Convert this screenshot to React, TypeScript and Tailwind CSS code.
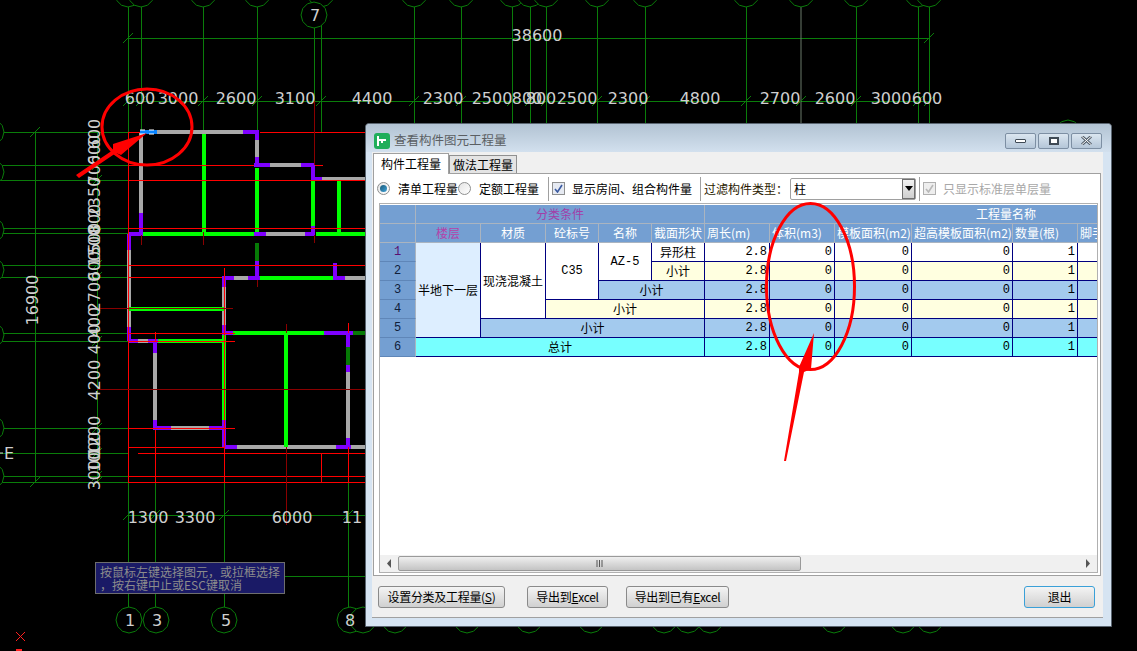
import type { ReactNode } from "react";

type Seg = [number, number, number, number];

const FONT = "font-['Noto_Sans_CJK_SC','Liberation_Sans',sans-serif]";

const gridH: Seg[] = [
  [128, 38, 929, 38],
  [128, 101, 929, 101],
  [0, 132, 128, 132], [0, 165, 128, 165], [0, 180, 128, 180], [0, 228, 128, 228], [0, 233, 128, 233],
  [0, 265, 128, 265], [0, 277, 128, 277], [0, 333, 128, 333], [0, 341, 128, 341], [0, 428, 128, 428],
  [0, 453, 128, 453], [0, 476, 128, 476], [0, 482, 128, 482],
  [128, 515, 365, 515],
  [285, 576, 365, 576],
];

const gridV: Seg[] = [
  [128, 7, 128, 132], [141, 7, 141, 132], [203, 7, 203, 132], [257, 7, 257, 132], [314, 28, 314, 101], [321, 7, 321, 132],
  [414, 7, 414, 123], [461, 7, 461, 123], [512, 7, 512, 123], [530, 7, 530, 123], [546, 7, 546, 123], [597, 7, 597, 123],
  [645, 7, 645, 123], [746, 7, 746, 123], [856, 7, 856, 123], [918, 7, 918, 123], [929, 7, 929, 123],
  [35, 132, 35, 483], [97, 132, 97, 483],
  [128, 482, 128, 607], [155, 482, 155, 607], [224, 482, 224, 607], [348, 482, 348, 607],
];

// tick marks on the dimension lines
const ticks: [number, number][] = [
  [128, 38], [929, 38], [128, 101], [141, 101], [203, 101], [257, 101], [321, 101], [414, 101], [461, 101], [512, 101],
  [530, 101], [546, 101], [597, 101], [645, 101], [746, 101], [801, 101], [856, 101], [918, 101], [929, 101],
  [128, 515], [155, 515], [224, 515], [348, 515],
  [97, 165], [97, 180], [97, 233], [97, 265], [97, 277], [97, 341], [97, 428], [97, 453], [97, 476], [97, 482],
  [35, 132], [35, 482],
];

const circles: [number, number][] = [
  [128, -6], [141, -6], [203, -6], [257, -6], [321, -6], [414, -6], [461, -6], [512, -6], [530, -6], [546, -6],
  [597, -6], [645, -6], [746, -6], [801, -6], [856, -6], [918, -6], [929, -6], [314, 15],
  [-9, 132], [-9, 172], [-9, 230], [-9, 270], [-9, 335], [-9, 428], [-9, 476],
  [129, 620], [156, 620], [224, 620], [350, 620], [363, 620],
  [395, 620], [467, 620], [529, 620], [591, 620], [664, 620], [688, 620], [710, 620], [834, 620], [903, 620], [930, 620],
  [1068, 133],
];

const gray: Seg[] = [
  [141, 132, 243, 132], [141, 132, 141, 213], [257, 132, 257, 157], [270, 165, 301, 165], [322, 179, 365, 179],
  [266, 234, 305, 234], [129, 250, 129, 328], [234, 278, 248, 278], [224, 287, 224, 325], [138, 341, 148, 341],
  [155, 353, 155, 420], [171, 428, 209, 428], [348, 372, 348, 438], [237, 447, 336, 447], [351, 447, 365, 447],
  [345, 278, 365, 278],
];

const green: Seg[] = [
  [203.5, 134, 203.5, 232], [257, 168, 257, 232], [313, 181, 313, 226], [339, 181, 339, 232],
  [143, 234, 254, 234], [316, 234, 365, 234], [260, 278, 333, 278], [129, 309, 224, 309], [158, 341, 224, 341],
  [224, 335, 224, 420], [233, 333, 324, 333], [286, 333, 286, 447],
];

const darkGreen: Seg[] = [[257, 243, 257, 261], [353, 333, 365, 333], [348, 347, 348, 365]];

const purple: Seg[] = [
  [243, 132, 259, 132], [257, 132, 257, 140], [257, 157, 257, 167], [254, 165, 270, 165], [301, 165, 315, 165],
  [313, 165, 313, 180], [313, 179, 322, 179], [313, 226, 313, 235], [141, 213, 141, 235], [128, 234, 143, 234],
  [254, 234, 266, 234], [305, 234, 315, 234], [129, 234, 129, 250], [257, 261, 257, 280], [248, 278, 260, 278],
  [333, 278, 345, 278], [335, 263, 335, 278], [222, 278, 234, 278], [224, 278, 224, 287], [224, 325, 224, 335],
  [129, 327, 129, 341], [128, 341, 138, 341], [148, 341, 158, 341], [155, 341, 155, 353], [155, 420, 155, 430],
  [155, 428, 171, 428], [209, 428, 224, 428], [224, 420, 224, 447], [224, 447, 237, 447], [224, 333, 233, 333],
  [324, 333, 353, 333], [348, 333, 348, 347], [348, 365, 348, 372], [348, 438, 348, 447], [336, 447, 351, 447],
];

const red: Seg[] = [
  [128, 132, 140, 132], [260, 132, 365, 132], [128, 165, 254, 165], [315, 165, 323, 165], [128, 180, 365, 180],
  [128, 228, 365, 228], [128, 265, 365, 265],
  [128, 277, 222, 277], [128, 333, 235, 333], [128, 341, 235, 341], [128, 428, 235, 428], [128, 447, 224, 447],
  [138, 453, 365, 453], [128, 476, 365, 476], [128, 482, 365, 482],
  [128, 132, 128, 482], [155, 332, 155, 341], [155, 430, 155, 482], [224, 268, 224, 482], [348, 323, 348, 333], [348, 447, 348, 482],
  [321, 454, 321, 482],
];

const darkRed: Seg[] = [
  [90, 308, 233, 308], [97, 389, 365, 389], [314, 101, 314, 165], [314, 235, 314, 243], [203, 232, 203, 245], [286, 324, 286, 333], [286, 447, 286, 525], [257, 280, 257, 287], [141, 235, 141, 245],
];

const hDims: [string, number, number][] = [
  ["38600", 537, 41], ["600", 140, 104], ["3000", 178, 104], ["2600", 236, 104], ["3100", 295, 104], ["4400", 372, 104],
  ["2300", 443, 104], ["2500", 492, 104], ["800", 527, 104], ["800", 541, 104], ["2500", 577, 104], ["2300", 628, 104],
  ["4800", 700, 104], ["2700", 780, 104], ["2600", 835, 104], ["3000", 891, 104], ["600", 927, 104],
  ["1300", 148, 523], ["3300", 195, 523], ["6000", 292, 523], ["11", 352, 523],
];

const vDims: [string, number, number][] = [
  ["600", 94, 134], ["600", 94, 150], ["700", 94, 170], ["2350", 94, 197], ["800", 94, 219], ["500", 94, 238], ["1500", 94, 246],
  ["600", 94, 266], ["2700", 94, 292], ["400", 94, 322], ["400", 94, 339], ["4200", 94, 380], ["1200", 94, 436], ["1000", 94, 452],
  ["3000", 94, 470], ["16900", 32, 300],
];

function Lines({ segs, color, width }: { segs: Seg[]; color: string; width: number }) {
  return (
    <g stroke={color} strokeWidth={width} shapeRendering="crispEdges">
      {segs.map((s, i) => (
        <line key={i} x1={s[0]} y1={s[1]} x2={s[2]} y2={s[3]} />
      ))}
    </g>
  );
}

function CadDrawing() {
  return (
    <svg className="absolute left-0 top-0" width={1137} height={651}>
      <Lines segs={gridH} color="#0a7d0a" width={1} />
      <Lines segs={gridV} color="#0a7d0a" width={1} />
      <line x1={801} y1={7} x2={801} y2={123} stroke="#6a7a6a" />
      {ticks.map(([x, y], i) => (
        <line key={i} x1={x - 5} y1={y + 5} x2={x + 5} y2={y - 5} stroke="#0a7d0a" />
      ))}
      {circles.map(([x, y], i) => (
        <polygon
          key={i}
          fill="#000"
          stroke="#0a7d0a"
          points={[0, 1, 2, 3, 4, 5, 6, 7, 8, 9, 10, 11]
            .map((k) => `${x + 13 * Math.cos((k * Math.PI) / 6)},${y + 13 * Math.sin((k * Math.PI) / 6)}`)
            .join(" ")}
        />
      ))}
      <Lines segs={gray} color="#a8a8a8" width={4} />
      <Lines segs={green} color="#00ff00" width={4} />
      <Lines segs={darkGreen} color="#067a06" width={4} />
      <Lines segs={purple} color="#7f00ff" width={4} />
      <Lines segs={red} color="#ff0000" width={1} />
      <Lines segs={darkRed} color="#8a0000" width={1} />
      <rect x={140} y={130} width={17} height={4} fill="#0a84ff" />
      <line x1={140} y1={130} x2={157} y2={130} stroke="#fff" strokeDasharray="5 4" />
      <line x1={140} y1={134} x2={157} y2={134} stroke="#fff" strokeDasharray="5 4" />
      <g fill="#cfcfcf" fontFamily="'DejaVu Sans', sans-serif" fontSize="16" textAnchor="middle">
        {hDims.map(([t, x, y], i) => (
          <text key={i} x={x} y={y}>
            {t}
          </text>
        ))}
        {vDims.map(([t, x, y], i) => (
          <text key={i} x={x} y={y + 6} transform={`rotate(-90 ${x} ${y})`}>
            {t}
          </text>
        ))}
        <text x={315} y={21}>7</text>
        <text x={130} y={626}>1</text>
        <text x={157} y={626}>3</text>
        <text x={226} y={626}>5</text>
        <text x={350} y={626}>8</text>
        <text x={9} y={459}>E</text>
      </g>
      <line x1={0} y1={453} x2={3} y2={453} stroke="#cfcfcf" />
      <path d="M16 632 L25 641 M25 632 L16 641" stroke="#ff2020" />
      <rect x={16} y={649} width={6} height={2} fill="#ff2020" />
    </svg>
  );
}

function Annotations() {
  return (
    <svg className="pointer-events-none absolute left-0 top-0" width={1137} height={651}>
      <g fill="none" stroke="#ff0000" strokeWidth={3}>
        <ellipse cx={147} cy={127} rx={45} ry={38} />
        <ellipse cx={810.5} cy={286.5} rx={44} ry={83} />
      </g>
      <path d="M76 175 L113 150 L113 144 L147 133 L121 155 L116 153 L79 178 Z" fill="#ff0000" />
      <path d="M784 461 L799 372 L799 367 L814 333 L811 369 L804 372 L786 461 Z" fill="#ff0000" />
    </svg>
  );
}

function Tooltip() {
  return (
    <div className={`absolute left-[95px] top-[562px] h-[32px] w-[190px] border border-[#6e6e6e] bg-[#1a1a66] px-[4px] text-[12px] leading-[13px] text-[#8c8c8c] ${FONT}`}>
      <div className="pt-[2px]">按鼠标左键选择图元，或拉框选择</div>
      <div>，按右键中止或ESC键取消</div>
    </div>
  );
}

function Cell({ className = "", children }: { className?: string; children?: ReactNode }) {
  return (
    <div className={`flex items-center justify-center overflow-hidden whitespace-nowrap border-b border-r border-[#000080] text-[12px] text-black ${className}`}>
      {children}
    </div>
  );
}

function HeaderCell({ className = "", color = "text-white", children }: { className?: string; color?: string; children?: ReactNode }) {
  return (
    <div className={`flex items-center overflow-hidden whitespace-nowrap border-b border-r border-[#aab4c0] bg-[#749fd2] text-[12px] ${color} ${className}`}>
      {children}
    </div>
  );
}

function RowHead({ n }: { n: number }) {
  return (
    <div className={`flex items-center justify-center border-b border-r border-b-[#5f86b8] border-r-[#aab4c0] bg-[#749fd2] font-['Liberation_Mono',monospace] text-[12px] ${n === 1 ? "text-[#5a1070]" : "text-[#10203a]"}`}>
      {n}
    </div>
  );
}

function Values({ bg }: { bg: string }) {
  const vals = ["2.8", "0", "0", "0", "1", ""];
  return (
    <>
      {vals.map((v, i) => (
        <Cell key={i} className={`justify-end pr-[2px] font-['Liberation_Mono',monospace] ${bg}`}>
          {v}
        </Cell>
      ))}
    </>
  );
}

function QuantityGrid() {
  return (
    <div className="w-[717px] flex-1 overflow-hidden">
      <div className="grid w-[763px] grid-cols-[36px_65px_65px_53px_53px_53px_65px_65px_77px_101px_65px_65px] auto-rows-[19px]">
        <HeaderCell />
        <HeaderCell className="col-span-5 justify-center" color="text-[#a23ea8]">分类条件</HeaderCell>
        <HeaderCell className="col-span-6 pl-[271px]">工程量名称</HeaderCell>

        <HeaderCell />
        <HeaderCell className="justify-center" color="text-[#b542a8]">楼层</HeaderCell>
        <HeaderCell className="justify-center">材质</HeaderCell>
        <HeaderCell className="justify-center">砼标号</HeaderCell>
        <HeaderCell className="justify-center">名称</HeaderCell>
        <HeaderCell className="justify-center">截面形状</HeaderCell>
        <HeaderCell className="pl-[2px]">周长(m)</HeaderCell>
        <HeaderCell className="pl-[2px]">体积(m3)</HeaderCell>
        <HeaderCell className="pl-[2px]">模板面积(m2)</HeaderCell>
        <HeaderCell className="pl-[2px]">超高模板面积(m2)</HeaderCell>
        <HeaderCell className="pl-[2px]">数量(根)</HeaderCell>
        <HeaderCell className="pl-[2px]">脚手架</HeaderCell>

        <RowHead n={1} />
        <Cell className="row-span-5 bg-[#ddeeff]">半地下一层</Cell>
        <Cell className="row-span-4 bg-white">现浇混凝土</Cell>
        <Cell className="row-span-3 bg-white font-['Liberation_Mono',monospace]">C35</Cell>
        <Cell className="row-span-2 bg-white font-['Liberation_Mono',monospace]">AZ-5</Cell>
        <Cell className="bg-white">异形柱</Cell>
        <Values bg="bg-white" />

        <RowHead n={2} />
        <Cell className="bg-[#ffffe0]">小计</Cell>
        <Values bg="bg-[#ffffe0]" />

        <RowHead n={3} />
        <Cell className="col-span-2 bg-[#a3caee]">小计</Cell>
        <Values bg="bg-[#a3caee]" />

        <RowHead n={4} />
        <Cell className="col-span-3 bg-[#ffffe0]">小计</Cell>
        <Values bg="bg-[#ffffe0]" />

        <RowHead n={5} />
        <Cell className="col-span-4 bg-[#a3caee]">小计</Cell>
        <Values bg="bg-[#a3caee]" />

        <RowHead n={6} />
        <Cell className="col-span-5 bg-[#77ffff]">总计</Cell>
        <Values bg="bg-[#77ffff]" />
      </div>
    </div>
  );
}

function Scrollbar() {
  return (
    <div className="flex h-[17px] shrink-0 items-center bg-[#f0f0f0]">
      <div className="flex w-[18px] justify-center">
        <svg width={5} height={9}><path d="M4 0 L0 4.5 L4 9 Z" fill="#555" /></svg>
      </div>
      <div className="flex h-[15px] w-[403px] items-center justify-center rounded-[2px] border border-[#9a9a9a] bg-gradient-to-b from-[#efefef] to-[#c4c4c4]">
        <svg width={8} height={7}><path d="M1 0 V7 M3.500 0 V7 M6 0 V7" stroke="#555" /></svg>
      </div>
      <div className="flex flex-1 justify-end pr-[7px]">
        <svg width={5} height={9}><path d="M1 0 L5 4.5 L1 9 Z" fill="#555" /></svg>
      </div>
    </div>
  );
}

function Radio({ checked }: { checked?: boolean }) {
  return (
    <span className="flex h-[13px] w-[13px] items-center justify-center rounded-full border border-[#8e8f8f] bg-gradient-to-br from-[#e4e4e4] to-white">
      {checked && <span className="h-[7px] w-[7px] rounded-full bg-gradient-to-br from-[#1c5a7a] to-[#3fa2d8]" />}
    </span>
  );
}

function Check({ disabled }: { disabled?: boolean }) {
  return (
    <span className={`flex h-[13px] w-[13px] items-center justify-center border ${disabled ? "border-[#b0b0b0] bg-[#eeeeee]" : "border-[#8e8f8f] bg-[#e6eaf2]"}`}>
      <svg width={9} height={9}>
        <path d="M1 5 L3.500 8 L8 1" fill="none" stroke={disabled ? "#b8b8b8" : "#3a5aa0"} strokeWidth={1.6} />
      </svg>
    </span>
  );
}

function Toolbar() {
  return (
    <div className="flex h-[29px] shrink-0 items-center text-[12px] text-black">
      <div className="ml-[3px] flex w-[81px] items-center gap-[8px]"><Radio checked /><span>清单工程量</span></div>
      <div className="flex w-[90px] items-center gap-[8px]"><Radio /><span>定额工程量</span></div>
      <div className="h-[24px] w-px bg-[#a0a0a0]" />
      <div className="ml-[3px] flex w-[148px] items-center gap-[7px]"><Check /><span>显示房间、组合构件量</span></div>
      <div className="h-[24px] w-px bg-[#a0a0a0]" />
      <span className="ml-[3px] w-[86px] text-[#2a1a00]">过滤构件类型：</span>
      <div className="flex h-[22px] w-[126px] items-center justify-between rounded-[2px] border border-[#a0a0a0] bg-white pl-[3px]">
        <span>柱</span>
        <span className="flex h-[20px] w-[13px] items-center justify-center border border-[#707070] bg-gradient-to-b from-[#f2f2f2] to-[#cfcfcf]">
          <svg width={8} height={5}><path d="M0 0 H8 L4 5 Z" fill="#000" /></svg>
        </span>
      </div>
      <div className="ml-[3px] h-[24px] w-px bg-[#a0a0a0]" />
      <div className="ml-[3px] flex items-center gap-[7px] text-[#a8a8a8]"><Check disabled /><span>只显示标准层单层量</span></div>
    </div>
  );
}

function ActionButton({ width, primary, children }: { width: string; primary?: boolean; children: ReactNode }) {
  return (
    <button
      type="button"
      className={`flex h-[22px] items-center justify-center rounded-[3px] border bg-gradient-to-b from-[#f4f4f4] to-[#d0d0d0] text-[12px] tracking-[-0.3px] text-black ${width} ${primary ? "border-[#3aa0d8]" : "border-[#8a8a8a]"}`}
    >
      {children}
    </button>
  );
}

function WinButton({ children }: { children: ReactNode }) {
  return (
    <span className="flex h-[16px] w-[31px] items-center justify-center rounded-[2px] border border-[#7d8fa3] bg-gradient-to-b from-[#dbe6f0] to-[#b4c6d8]">
      {children}
    </span>
  );
}

function QuantityDialog() {
  return (
    <div className={`absolute left-[365px] top-[123px] flex h-[504px] w-[747px] flex-col rounded-t-[4px] border border-[#5a6570] bg-[#d6e4f2] ${FONT}`}>
      <div className="flex h-[28px] shrink-0 items-center rounded-t-[4px] bg-gradient-to-b from-[#b2c3d3] to-[#d2e0ee] pl-[8px] pr-[9px] pt-[5px]">
        <span className="flex h-[16px] w-[16px] items-center justify-center rounded-[3px] bg-[#1fae5a]">
          <svg width={12} height={12}><path d="M2 1 V11 M2 5 H10 M6 5 V8" stroke="#fff" strokeWidth={2} fill="none" /></svg>
        </span>
        <span className="ml-[4px] text-[12.500px] text-[#5b5f63]">查看构件图元工程量</span>
        <div className="ml-auto flex gap-[2px]">
          <WinButton><span className="h-[4px] w-[11px] rounded-[1px] border border-[#3f4a55] bg-white" /></WinButton>
          <WinButton><span className="h-[8px] w-[10px] border-2 border-[#3f4a55] bg-white" /></WinButton>
          <WinButton>
            <svg width={11} height={9}>
              <path d="M1 0.500 L10 8.500 M10 0.500 L1 8.500" stroke="#55606c" strokeWidth={3} />
              <path d="M1 0.500 L10 8.500 M10 0.500 L1 8.500" stroke="#fff" strokeWidth={1} />
            </svg>
          </WinButton>
        </div>
      </div>
      <div className="mb-[8px] ml-[6px] mr-[8px] flex flex-1 flex-col border-b border-[#a0a0a0] bg-[#f0f0f0]">
        <div className="flex h-[21px] shrink-0 items-end pl-[1px] text-[12px] text-black">
          <div className="z-10 -mb-px flex h-[21px] w-[76px] items-center justify-center border border-b-0 border-[#a0a0a0] bg-white">构件工程量</div>
          <div className="flex h-[18px] w-[68px] items-center justify-center border border-b-0 border-[#909090] bg-[#e4e4e4]">做法工程量</div>
        </div>
        <div className="ml-px mr-[2px] flex h-[403px] shrink-0 flex-col border border-[#a0a0a0] bg-white">
          <Toolbar />
          <div className="ml-[5px] flex h-[370px] w-[719px] flex-col overflow-hidden border border-[#b0b0b0] pt-px">
            <QuantityGrid />
            <Scrollbar />
          </div>
        </div>
        <div className="flex flex-1 items-center pl-[6px] pr-[8px]">
          <ActionButton width="w-[127px]">设置分类及工程量(<u>S</u>)</ActionButton>
          <div className="w-[22px]" />
          <ActionButton width="w-[81px]">导出到<u>E</u>xcel</ActionButton>
          <div className="w-[18px]" />
          <ActionButton width="w-[103px]">导出到已有<u>E</u>xcel</ActionButton>
          <div className="flex-1" />
          <ActionButton width="w-[71px]" primary>退出</ActionButton>
        </div>
      </div>
    </div>
  );
}

export default function App() {
  return (
    <main className="relative h-[651px] w-[1137px] overflow-hidden bg-black">
      <CadDrawing />
      <Tooltip />
      <QuantityDialog />
      <Annotations />
    </main>
  );
}
